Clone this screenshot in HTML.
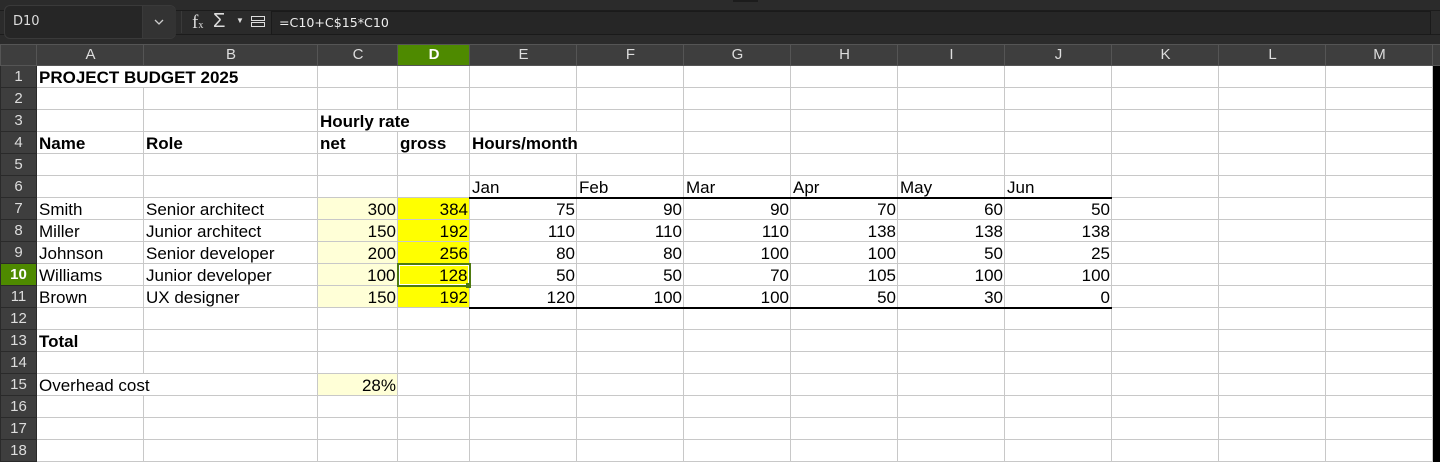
<!DOCTYPE html>
<html><head><meta charset="utf-8"><style>
*{box-sizing:border-box;margin:0;padding:0}
body{width:1440px;height:460px;overflow:hidden;background:#2b2b2b;font-family:"Liberation Sans",sans-serif;position:relative}
.top{position:absolute;left:0;top:0;width:1440px;height:44px;background:#2b2b2b}
.ln{position:absolute;left:0;width:1440px;height:1px;background:#1c1c1c}
.nb{position:absolute;left:4px;top:5px;width:172px;height:34px;background:#262626;border:1px solid #3a3a3a;border-radius:6px;color:#ddd;font-size:13px;line-height:32px;padding-left:8px;font-family:"DejaVu Sans",sans-serif}
.nb .dd{position:absolute;left:137px;top:0;width:34px;height:32px;background:#333;border-left:1px solid #3a3a3a;border-radius:0 6px 6px 0}
.fx{position:absolute;left:271px;top:11px;width:1160px;height:24px;background:#262626;border:1px solid #1a1a1a;color:#eee;font-size:12.6px;line-height:22px;padding-left:7px;font-family:"DejaVu Sans",sans-serif}
.ic{position:absolute;color:#ddd}
table{position:absolute;left:0;top:44px;border-collapse:collapse;table-layout:fixed;width:1440px}
td{border:1px solid #c8c8c8;height:22px;background:#fff;font-size:17px;color:#000;padding:0 1px 0 2px;white-space:nowrap;overflow:visible;vertical-align:bottom;line-height:19px}
tr.h td{background:#3e3e3e;border:1px solid #555;color:#ddd;text-align:center;height:21px;font-size:15px;vertical-align:middle;line-height:18px}
td.r{background:#3e3e3e;border:1px solid #2a2a2a;color:#ddd;text-align:center;font-size:15px;vertical-align:middle;padding:0;line-height:18px}
td.corner{background:#2b2b2b;border:none}
td.sb{background:#000;border:none}
tr.h td.sb{background:#3e3e3e}
.sel{background:#4e8a00!important;color:#fff!important;font-weight:bold}
.b{font-weight:bold}.n{text-align:right}
.y1{background:#ffffd7}.y2{background:#ffff00}
</style></head><body>
<div class="top"></div>
<div class="ln" style="top:10px"></div><div class="ln" style="top:34px"></div>
<div style="position:absolute;left:733px;top:0;width:25px;height:2px;background:#1c1c1c"></div>
<div class="nb">D10<div class="dd"><svg width="34" height="32"><path d="M12 14l4 4 4-4" stroke="#ccc" stroke-width="1.3" fill="none"/></svg></div></div>
<div style="position:absolute;left:181px;top:11px;width:1px;height:22px;background:#3a3a3a"></div>
<div class="ic" style="left:192px;top:12px;font-size:19px;font-family:'Liberation Serif',serif">f<span style="font-size:10px">x</span></div>
<div class="ic" style="left:213px;top:10px;font-size:20px">Σ</div>
<div class="ic" style="left:236px;top:16px;font-size:8px">▼</div>
<svg class="ic" style="left:251px;top:16px" width="15" height="11"><rect x="0.5" y="0.5" width="13" height="4" fill="none" stroke="#ddd"/><rect x="0.5" y="6.5" width="13" height="4" fill="none" stroke="#ddd"/></svg>
<div class="fx">=C10+C$15*C10</div>
<table>
<colgroup><col style="width:36px"><col style="width:107px"><col style="width:174px"><col style="width:80px"><col style="width:72px"><col style="width:107px"><col style="width:107px"><col style="width:107px"><col style="width:107px"><col style="width:107px"><col style="width:107px"><col style="width:107px"><col style="width:107px"><col style="width:107px"><col style="width:8px"></colgroup>
<tr class="h"><td class="corner"></td><td>A</td><td>B</td><td>C</td><td class="sel">D</td><td>E</td><td>F</td><td>G</td><td>H</td><td>I</td><td>J</td><td>K</td><td>L</td><td>M</td><td class="sb"></td></tr>
<tr><td class="r">1</td><td class="b" style="border-right:none">PROJECT BUDGET 2025</td><td style="border-left:none"></td><td></td><td></td><td></td><td></td><td></td><td></td><td></td><td></td><td></td><td></td><td></td><td class="sb"></td></tr>
<tr><td class="r">2</td><td></td><td></td><td></td><td></td><td></td><td></td><td></td><td></td><td></td><td></td><td></td><td></td><td></td><td class="sb"></td></tr>
<tr><td class="r">3</td><td></td><td></td><td class="b" style="border-right:none">Hourly rate</td><td style="border-left:none"></td><td></td><td></td><td></td><td></td><td></td><td></td><td></td><td></td><td></td><td class="sb"></td></tr>
<tr><td class="r">4</td><td class="b">Name</td><td class="b">Role</td><td class="b">net</td><td class="b">gross</td><td class="b" style="border-right:none">Hours/month</td><td style="border-left:none"></td><td></td><td></td><td></td><td></td><td></td><td></td><td></td><td class="sb"></td></tr>
<tr><td class="r">5</td><td></td><td></td><td></td><td></td><td></td><td></td><td></td><td></td><td></td><td></td><td></td><td></td><td></td><td class="sb"></td></tr>
<tr><td class="r">6</td><td></td><td></td><td></td><td></td><td style="border-bottom:2px solid #000">Jan</td><td style="border-bottom:2px solid #000">Feb</td><td style="border-bottom:2px solid #000">Mar</td><td style="border-bottom:2px solid #000">Apr</td><td style="border-bottom:2px solid #000">May</td><td style="border-bottom:2px solid #000">Jun</td><td></td><td></td><td></td><td class="sb"></td></tr>
<tr><td class="r">7</td><td>Smith</td><td>Senior architect</td><td class="n y1">300</td><td class="n y2">384</td><td class="n">75</td><td class="n">90</td><td class="n">90</td><td class="n">70</td><td class="n">60</td><td class="n">50</td><td></td><td></td><td></td><td class="sb"></td></tr>
<tr><td class="r">8</td><td>Miller</td><td>Junior architect</td><td class="n y1">150</td><td class="n y2">192</td><td class="n">110</td><td class="n">110</td><td class="n">110</td><td class="n">138</td><td class="n">138</td><td class="n">138</td><td></td><td></td><td></td><td class="sb"></td></tr>
<tr><td class="r">9</td><td>Johnson</td><td>Senior developer</td><td class="n y1">200</td><td class="n y2">256</td><td class="n">80</td><td class="n">80</td><td class="n">100</td><td class="n">100</td><td class="n">50</td><td class="n">25</td><td></td><td></td><td></td><td class="sb"></td></tr>
<tr><td class="r sel">10</td><td>Williams</td><td>Junior developer</td><td class="n y1">100</td><td class="n y2" style="border:2px solid #4e7a10;box-shadow:inset 0 0 0 1px #fff">128</td><td class="n">50</td><td class="n">50</td><td class="n">70</td><td class="n">105</td><td class="n">100</td><td class="n">100</td><td></td><td></td><td></td><td class="sb"></td></tr>
<tr><td class="r">11</td><td>Brown</td><td>UX designer</td><td class="n y1">150</td><td class="n y2">192</td><td class="n" style="border-bottom:2px solid #000">120</td><td class="n" style="border-bottom:2px solid #000">100</td><td class="n" style="border-bottom:2px solid #000">100</td><td class="n" style="border-bottom:2px solid #000">50</td><td class="n" style="border-bottom:2px solid #000">30</td><td class="n" style="border-bottom:2px solid #000">0</td><td></td><td></td><td></td><td class="sb"></td></tr>
<tr><td class="r">12</td><td></td><td></td><td></td><td></td><td></td><td></td><td></td><td></td><td></td><td></td><td></td><td></td><td></td><td class="sb"></td></tr>
<tr><td class="r">13</td><td class="b">Total</td><td></td><td></td><td></td><td></td><td></td><td></td><td></td><td></td><td></td><td></td><td></td><td></td><td class="sb"></td></tr>
<tr><td class="r">14</td><td></td><td></td><td></td><td></td><td></td><td></td><td></td><td></td><td></td><td></td><td></td><td></td><td></td><td class="sb"></td></tr>
<tr><td class="r">15</td><td style="border-right:none">Overhead cost</td><td style="border-left:none"></td><td class="n y1">28%</td><td></td><td></td><td></td><td></td><td></td><td></td><td></td><td></td><td></td><td></td><td class="sb"></td></tr>
<tr><td class="r">16</td><td></td><td></td><td></td><td></td><td></td><td></td><td></td><td></td><td></td><td></td><td></td><td></td><td></td><td class="sb"></td></tr>
<tr><td class="r">17</td><td></td><td></td><td></td><td></td><td></td><td></td><td></td><td></td><td></td><td></td><td></td><td></td><td></td><td class="sb"></td></tr>
<tr><td class="r">18</td><td></td><td></td><td></td><td></td><td></td><td></td><td></td><td></td><td></td><td></td><td></td><td></td><td></td><td class="sb"></td></tr>
</table>
<div style="position:absolute;left:466px;top:283px;width:5px;height:5px;background:#4e7a10"></div>
</body></html>
